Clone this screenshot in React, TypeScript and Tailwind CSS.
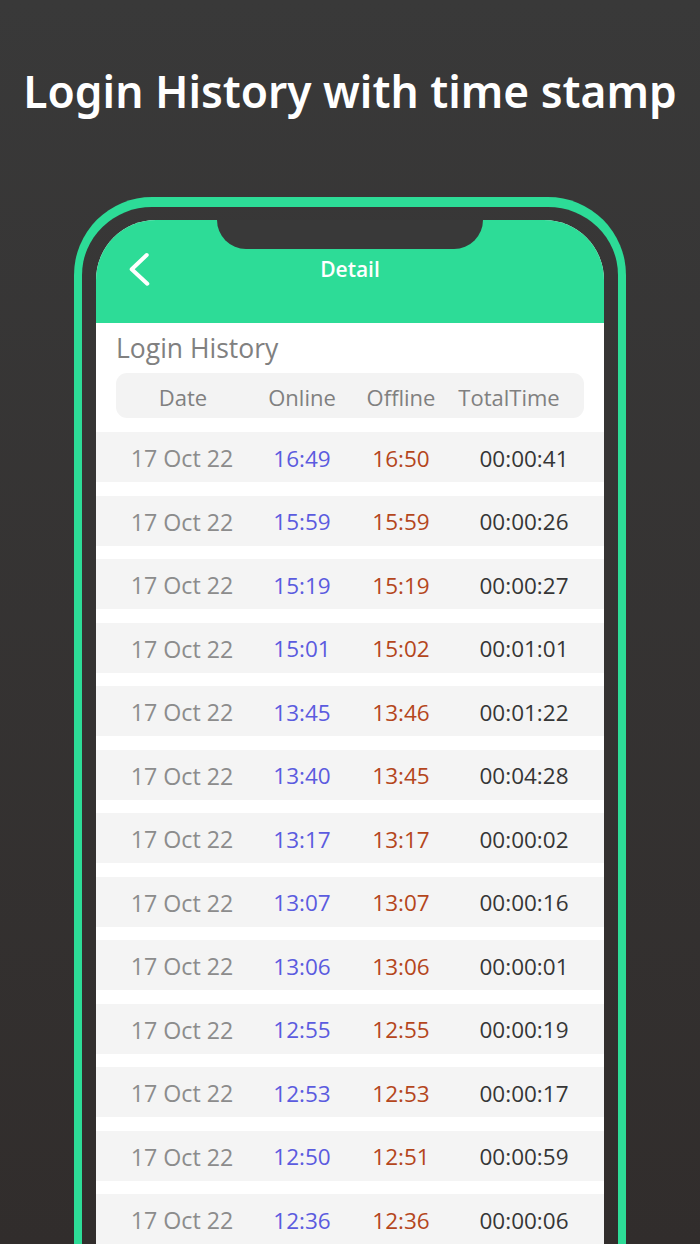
import React from "react";

const rows: [string, string, string][] = [
  ["16:49", "16:50", "00:00:41"],
  ["15:59", "15:59", "00:00:26"],
  ["15:19", "15:19", "00:00:27"],
  ["15:01", "15:02", "00:01:01"],
  ["13:45", "13:46", "00:01:22"],
  ["13:40", "13:45", "00:04:28"],
  ["13:17", "13:17", "00:00:02"],
  ["13:07", "13:07", "00:00:16"],
  ["13:06", "13:06", "00:00:01"],
  ["12:55", "12:55", "00:00:19"],
  ["12:53", "12:53", "00:00:17"],
  ["12:50", "12:51", "00:00:59"],
  ["12:36", "12:36", "00:00:06"],
];

export default function App() {
  return (
    <div className="w-[700px] h-[1244px] overflow-hidden bg-gradient-to-b from-[#393939] to-[#312d2c] flex flex-col items-center">
      <h1
        className="mt-[61px] text-white text-[44.3px] leading-[60px] font-semibold whitespace-nowrap"
        style={{ fontFamily: '"Noto Sans", sans-serif' }}
      >
        Login History with time stamp
      </h1>
      <div className="mt-[76px] w-[552px] flex-1 border-x-[8px] border-t-[10px] border-[#2ddc97] rounded-t-[78px] px-[14px] pt-[13px] flex flex-col">
        <div
          className="relative flex-1 bg-white rounded-t-[60px] overflow-hidden"
          style={{ fontFamily: '"Open Sans", "Noto Sans", sans-serif' }}
        >
          <div className="absolute top-0 left-[121px] w-[266px] h-[29px] bg-[#393939] rounded-b-[30px]" />
          <div className="h-[103px] bg-[#2ddc97] flex items-start">
            <div className="mt-[30px] w-full h-[36px] grid grid-cols-[1fr_auto_1fr] items-center">
              <div className="pl-[32px] flex items-center">
                <svg width="24" height="36" viewBox="0 0 24 36" fill="none">
                  <path
                    d="M18.7 4 L3.7 18.3 L19.3 32.7"
                    stroke="white"
                    strokeWidth="4"
                    strokeLinecap="round"
                    strokeLinejoin="round"
                  />
                </svg>
              </div>
              <div className="text-white text-[21px] font-semibold leading-[36px] pt-[1px]">Detail</div>
              <div />
            </div>
          </div>
          <div className="px-[20px] pt-[7px]">
            <div className="text-[#808080] text-[26.5px] leading-[36px]">Login History</div>
            <div className="mt-[7px] h-[45px] bg-[#f3f3f3] rounded-[11px] flex items-center text-[#808080] text-[22px] pt-[3px]">
              <div className="w-[134px] text-center">Date</div>
              <div className="w-[104px] text-center">Online</div>
              <div className="w-[94px] text-center">Offline</div>
              <div className="w-[122px] text-center">TotalTime</div>
            </div>
          </div>
          <div className="mt-[14px] flex flex-col gap-[13.5px]">
            {rows.map((r, i) => (
              <div key={i} className="h-[50px] pt-[3px] bg-[#f4f4f4] flex items-center text-[22.5px] whitespace-nowrap">
                <div className="w-[172px] text-center text-[#8c8c8c] text-[23.2px]">17 Oct 22</div>
                <div className="w-[68px] flex justify-center text-[#5b5bdf]">{r[0]}</div>
                <div className="w-[130px] text-center text-[#b4461c]">{r[1]}</div>
                <div className="w-[116px] text-center text-[#363636]">{r[2]}</div>
              </div>
            ))}
          </div>
        </div>
      </div>
    </div>
  );
}
